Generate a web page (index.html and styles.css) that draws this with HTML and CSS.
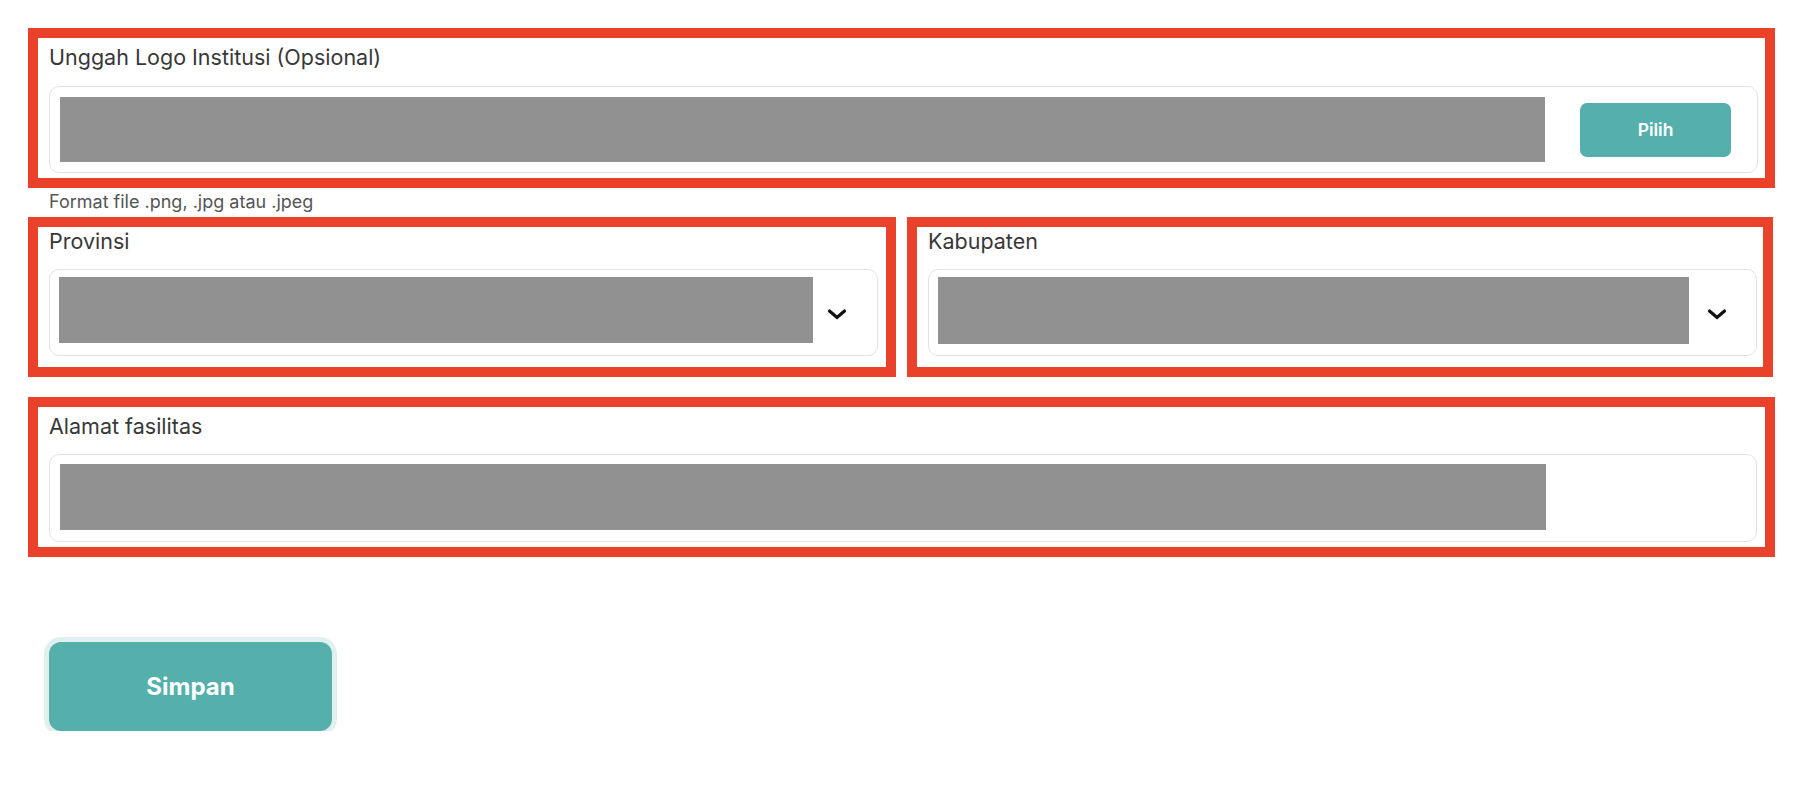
FILE: index.html
```html
<!DOCTYPE html>
<html lang="id">
<head>
<meta charset="utf-8">
<title>Form Institusi</title>
<link rel="stylesheet" href="styles.css">
</head>
<body>
<main class="form">
  <section class="field field--logo">
    <label class="field__label">Unggah Logo Institusi (Opsional)</label>
    <div class="input input--file">
      <div class="redact"></div>
      <button class="btn-pick" type="button">Pilih</button>
    </div>
  </section>
  <p class="hint">Format file .png, .jpg atau .jpeg</p>

  <div class="row">
    <section class="field field--prov">
      <label class="field__label">Provinsi</label>
      <div class="input input--select input--prov">
        <div class="redact"></div>
        <svg class="chevron chevron--prov" width="20" height="12" viewBox="0 0 20 12"><path d="M2.5 3 L10 9.5 L17.5 3" fill="none" stroke="#111" stroke-width="3.2" stroke-linecap="round" stroke-linejoin="miter"/></svg>
      </div>
    </section>
    <section class="field field--kab">
      <label class="field__label">Kabupaten</label>
      <div class="input input--select input--kab">
        <div class="redact"></div>
        <svg class="chevron chevron--kab" width="20" height="12" viewBox="0 0 20 12"><path d="M2.5 3 L10 9.5 L17.5 3" fill="none" stroke="#111" stroke-width="3.2" stroke-linecap="round" stroke-linejoin="miter"/></svg>
      </div>
    </section>
  </div>

  <section class="field field--alamat">
    <label class="field__label">Alamat fasilitas</label>
    <div class="input input--text">
      <div class="redact"></div>
    </div>
  </section>

  <button class="btn-save" type="button">Simpan</button>
</main>
</body>
</html>
```

FILE: styles.css
```css
* { box-sizing: border-box; }

html, body {
  margin: 0;
  background: #ffffff;
  font-family: Inter, "Noto Sans", "Liberation Sans", sans-serif;
  color: #333333;
}

.form {
  display: flex;
  flex-direction: column;
  align-items: flex-start;
  padding: 28px 29px 0 28px;
  width: 1804px;
}

.field {
  border: 10px solid #e9412a;
  display: flex;
  flex-direction: column;
  width: 100%;
}

.field__label {
  display: block;
  font-size: 21.5px;
  line-height: 24px;
  color: #383838;
  letter-spacing: 0;
}

.input {
  display: flex;
  align-items: center;
  border: 1px solid #e3e3e3;
  border-radius: 10px;
  background: #fff;
}

.redact {
  flex: 1;
  background: #919191;
  height: 65px;
}

/* Logo field */
.field--logo { padding: 7px 7px 5px 10px; }
.field--logo .field__label { margin: 0 0 17px 1px; }
.input--file { height: 87px; padding: 0 26px 0 10px; margin-left: 1px; }
.input--file .redact { height: 65px; }

.btn-pick {
  width: 151px;
  height: 54px;
  margin-left: 35px;
  border: 0;
  border-radius: 7px;
  background: #55b0ab;
  color: #ffffff;
  font-family: inherit;
  font-size: 17.5px;
  font-weight: 600;
  padding: 0;
}

.hint {
  margin: 4px 0 5px 21px;
  font-size: 18px;
  line-height: 20px;
  color: #555555;
}

/* Row of selects */
.row {
  display: grid;
  grid-template-columns: 868px 866px;
  gap: 11px;
  width: 1745px;
}

.field--prov { padding: 2px 8px 11px 11px; }
.field--kab { padding: 2px 6px 11px 11px; }
.field--prov .field__label,
.field--kab .field__label { margin: 0 0 16px 0; }

.input--select {
  height: 87px;
  align-items: flex-start;
}
.input--prov { padding: 7px 0 0 9px; }
.input--kab { padding: 7px 0 0 9px; }
.input--prov .redact { height: 66px; }
.input--kab .redact { height: 67px; }

.chevron { align-self: center; flex: none; margin-top: -4px; }
.chevron--prov { margin-left: 14px; margin-right: 30px; }
.chevron--kab { margin-left: 18px; margin-right: 29px; }

/* Address */
.field--alamat {
  margin-top: 20px;
  padding: 7px 8px 5px 11px;
}
.field--alamat .field__label { margin: 0 0 16px 0; }
.input--text {
  height: 88px;
  align-items: flex-start;
  padding: 9px 210px 0 10px;
}
.input--text .redact { height: 66px; }

/* Save */
.btn-save {
  margin: 85px 0 0 21px;
  width: 283px;
  height: 89px;
  border: 0;
  border-radius: 12px;
  background: #55b0ab;
  box-shadow: 0 0 0 5px #dff0ef;
  color: #ffffff;
  font-family: inherit;
  font-size: 24px;
  font-weight: 700;
  padding: 0;
}
```
